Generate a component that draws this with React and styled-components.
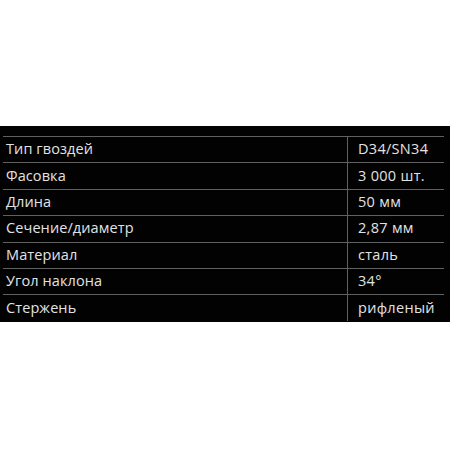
import React from 'react';
import styled, { createGlobalStyle } from 'styled-components';

const specs = [
  ['Тип гвоздей', 'D34/SN34'],
  ['Фасовка', '3 000 шт.'],
  ['Длина', '50 мм'],
  ['Сечение/диаметр', '2,87 мм'],
  ['Материал', 'сталь'],
  ['Угол наклона', '34°'],
  ['Стержень', 'рифленый'],
];

const App = () => {
  return (
    <>
      <GlobalStyle />
      <Band>
        <SpecTable>
          <tbody>
            {specs.map(([label, value]) => (
              <Row key={label}>
                <Label>{label}</Label>
                <Value>{value}</Value>
              </Row>
            ))}
          </tbody>
        </SpecTable>
      </Band>
    </>
  );
};

export default App;

const GlobalStyle = createGlobalStyle`
  body {
    margin: 0;
    font-family: "Open Sans", "Liberation Sans", sans-serif;
  }
`;

const Band = styled.div`
  margin-top: 126px;
  width: 450px;
  height: 196px;
  box-sizing: border-box;
  padding: 10px 6px 0 3px;
  background: #020202;
`;

const SpecTable = styled.table`
  width: 441px;
  border-collapse: collapse;
  table-layout: fixed;
`;

const Row = styled.tr`
  height: 26.4px;
  border-top: 1px solid #606060;
`;

const Label = styled.td`
  padding: 0 0 2px 3px;
  color: #e2e2e2;
  font-size: 14.5px;
  letter-spacing: 0.1px;
  white-space: nowrap;
`;

const Value = styled.td`
  width: 86px;
  padding: 0 0 2px 10px;
  border-left: 1px solid #606060;
  color: #e2e2e2;
  font-size: 14.5px;
  letter-spacing: 0.3px;
  white-space: nowrap;
`;
